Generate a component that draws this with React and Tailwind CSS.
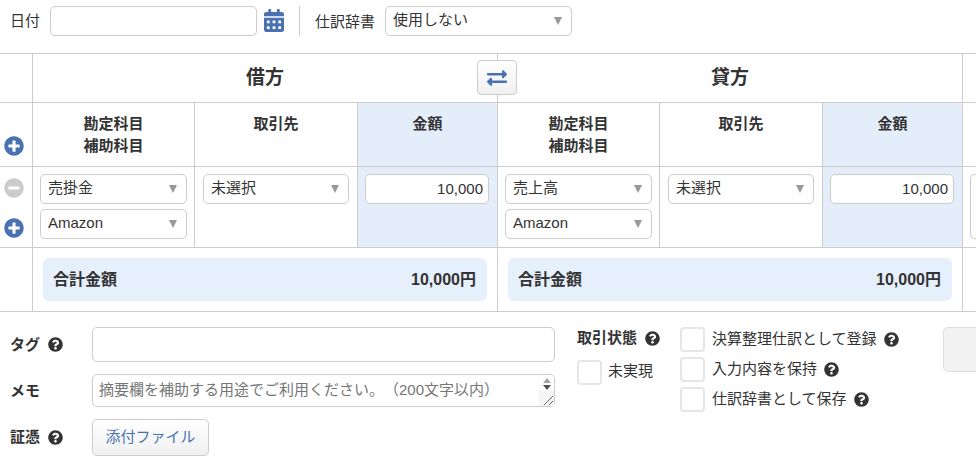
import { FaCalendarAlt, FaExchangeAlt, FaMinusCircle, FaPlusCircle, FaQuestionCircle } from 'react-icons/fa'

const FONT = { fontFamily: '"Liberation Sans", "Noto Sans CJK JP", sans-serif' }

function Select({ label, className = '' }) {
  return (
    <div className={`flex h-[30px] items-center justify-between rounded-[5px] border border-[#ccc] bg-white pl-[7px] pr-[9px] text-[15px] text-[#333] ${className}`}>
      <span className="-mt-[1px]">{label}</span>
      <span className="h-0 w-0 border-x-[4.5px] border-t-[8px] border-x-transparent border-t-[#999]" />
    </div>
  )
}

function HelpIcon({ className = '' }) {
  return <FaQuestionCircle className={`text-[15px] text-[#333] ${className}`} />
}

function Checkbox() {
  return <span className="block h-[25px] w-[25px] shrink-0 rounded-[4px] border-2 border-[#e6e6e6] bg-white" />
}

function CheckRow({ label }) {
  return (
    <div className="flex h-[25px] items-center text-[15px] text-[#333]">
      <Checkbox />
      <span className="ml-[7px] -mt-[1px]">{label}</span>
      <HelpIcon className="ml-[7px]" />
    </div>
  )
}

function HeaderCell({ lines, shaded }) {
  return (
    <div className={`border-b border-r border-[#ccc] pt-[10px] text-center text-[15px] font-bold leading-[22px] text-[#333] ${shaded ? 'bg-[#e4eefb]' : ''}`}>
      {lines.map((line) => (
        <div key={line}>{line}</div>
      ))}
    </div>
  )
}

function Side({ title }) {
  return (
    <div className="col-span-3 flex items-center justify-center border-b border-r border-[#ccc] text-[19px] font-bold text-[#333]">
      {title}
    </div>
  )
}

function HeaderCells() {
  return (
    <>
      <HeaderCell lines={['勘定科目', '補助科目']} />
      <HeaderCell lines={['取引先']} />
      <HeaderCell lines={['金額']} shaded />
    </>
  )
}

function DataCells({ account }) {
  return (
    <>
      <div className="flex flex-col gap-[5px] border-b border-r border-[#ccc] px-[7px] pt-[7px]">
        <Select label={account} />
        <Select label="Amazon" />
      </div>
      <div className="border-b border-r border-[#ccc] px-[8px] pt-[7px]">
        <Select label="未選択" />
      </div>
      <div className="border-b border-r border-[#ccc] bg-[#e4eefb] pl-[7px] pt-[7px]">
        <div className="flex h-[30px] w-[124px] items-center justify-end rounded-[5px] border border-[#ccc] bg-white pr-[5px] text-[15px] text-[#333]">
          10,000
        </div>
      </div>
    </>
  )
}

function TotalCell() {
  return (
    <div className="col-span-3 border-b border-r border-[#ccc] px-[10px] pt-[10px]">
      <div className="flex h-[43px] items-center justify-between rounded-[6px] bg-[#e6f0fc] pl-[10px] pr-[11px] text-base font-bold text-[#333]">
        <span>合計金額</span>
        <span>10,000円</span>
      </div>
    </div>
  )
}

export default function App() {
  return (
    <div className="h-[458px] w-[976px] overflow-hidden bg-white" style={FONT}>
      <div className="flex h-[54px] items-start border-b border-[#ccc] pl-[10px] pt-[6px] text-[15px] text-[#333]">
        <span className="mt-[4px] w-[40px]">日付</span>
        <div className="h-[30px] w-[207px] rounded-[5px] border border-[#ccc] bg-white" />
        <FaCalendarAlt className="ml-[7px] mt-[3px] h-[23px] w-[20px] text-[#4a72b2]" />
        <div className="ml-[15px] h-[30px] w-px bg-[#ccc]" />
        <span className="ml-[15px] mt-[5px] w-[70px]">仕訳辞書</span>
        <Select label="使用しない" className="w-[187px]" />
      </div>

      <div className="relative grid grid-cols-[33px_162px_163px_140px_162px_163px_140px_1fr] grid-rows-[49px_64px_81px_64px]">
        <div className="border-b border-r border-[#ccc]" />
        <Side title="借方" />
        <Side title="貸方" />
        <div className="border-b border-[#ccc]" />

        <div className="border-b border-r border-[#ccc] pl-[4px] pt-[33px]">
          <FaPlusCircle className="text-[20px] text-[#4a72b2]" />
        </div>
        <HeaderCells />
        <HeaderCells />
        <div className="border-b border-[#ccc]" />

        <div className="flex flex-col items-start border-b border-r border-[#ccc] pl-[4px] pt-[11px]">
          <FaMinusCircle className="text-[20px] text-[#ccc]" />
          <FaPlusCircle className="mt-[20px] text-[20px] text-[#4a72b2]" />
        </div>
        <DataCells account="売掛金" />
        <DataCells account="売上高" />
        <div className="border-b border-[#ccc] pl-[7px] pt-[7px]">
          <div className="h-[65px] rounded-l-[5px] border border-r-0 border-[#ccc] bg-white" />
        </div>

        <div className="border-b border-r border-[#ccc]" />
        <TotalCell />
        <TotalCell />
        <div className="border-b border-[#ccc]" />

        <button
          type="button"
          className="absolute left-[477px] top-[6px] flex h-[35px] w-[40px] items-center justify-center rounded-[4px] border border-[#ccc] bg-gradient-to-b from-white to-[#f0f0f0] text-[#4a72b2]"
        >
          <FaExchangeAlt className="text-[20px]" />
        </button>
      </div>

      <div className="flex pl-[10px] pt-[15px] text-[15px] text-[#333]">
        <div className="flex w-[545px] shrink-0 flex-col">
          <div className="flex h-[35px] items-center">
            <span className="mt-[1px] w-[38px] font-bold">タグ</span>
            <HelpIcon className="w-[15px]" />
            <div className="ml-[29px] h-[35px] w-[463px] rounded-[5px] border border-[#ccc] bg-white" />
          </div>
          <div className="mt-[12px] flex h-[33px] items-center">
            <span className="mt-[1px] w-[82px] font-bold">メモ</span>
            <div className="relative h-[33px] w-[463px] overflow-hidden rounded-[5px] border border-[#ccc] bg-white">
              <textarea
                rows={1}
                readOnly
                placeholder="摘要欄を補助する用途でご利用ください。（200文字以内）"
                className="block h-full w-full resize-none overflow-hidden py-[5px] pl-[6px] text-[15px] leading-[20px] [text-spacing-trim:space-all] placeholder:text-[#757575]"
              />
              <div className="absolute right-0 top-0 flex h-full w-[15px] flex-col items-center bg-white pt-[3px]">
                <span className="h-0 w-0 border-x-[4px] border-b-[5px] border-x-transparent border-b-[#a3a3a3]" />
                <span className="mt-[2px] h-0 w-0 border-x-[4px] border-t-[5px] border-x-transparent border-t-[#505050]" />
              </div>
              <svg className="absolute bottom-0 right-0 h-[15px] w-[15px] bg-[#f5f5f5]" viewBox="0 0 15 15">
                <path d="M5 14 L14 5 M10 14 L14 10" stroke="#666" strokeWidth="1" fill="none" />
              </svg>
            </div>
          </div>
          <div className="mt-[12px] flex h-[37px] items-center">
            <span className="w-[38px] font-bold">証憑</span>
            <HelpIcon className="w-[15px]" />
            <button
              type="button"
              className="ml-[29px] h-[37px] w-[117px] rounded-[5px] border border-[#ccc] bg-gradient-to-b from-white to-[#f0f0f0] text-[15px] text-[#4a72b2]"
            >
              添付ファイル
            </button>
          </div>
        </div>

        <div className="ml-[22px] w-[103px] shrink-0">
          <div className="flex items-center">
            <span className="font-bold">取引状態</span>
            <HelpIcon className="ml-[8px]" />
          </div>
          <div className="mt-[10px] flex items-center">
            <Checkbox />
            <span className="ml-[6px] -mt-[1px]">未実現</span>
          </div>
        </div>

        <div className="flex w-[263px] shrink-0 flex-col gap-[5px]">
          <CheckRow label="決算整理仕訳として登録" />
          <CheckRow label="入力内容を保持" />
          <CheckRow label="仕訳辞書として保存" />
        </div>

        <div className="h-[45px] w-[60px] shrink-0 rounded-l-[5px] border border-[#ddd] bg-[#f2f2f2]" />
      </div>
    </div>
  )
}
